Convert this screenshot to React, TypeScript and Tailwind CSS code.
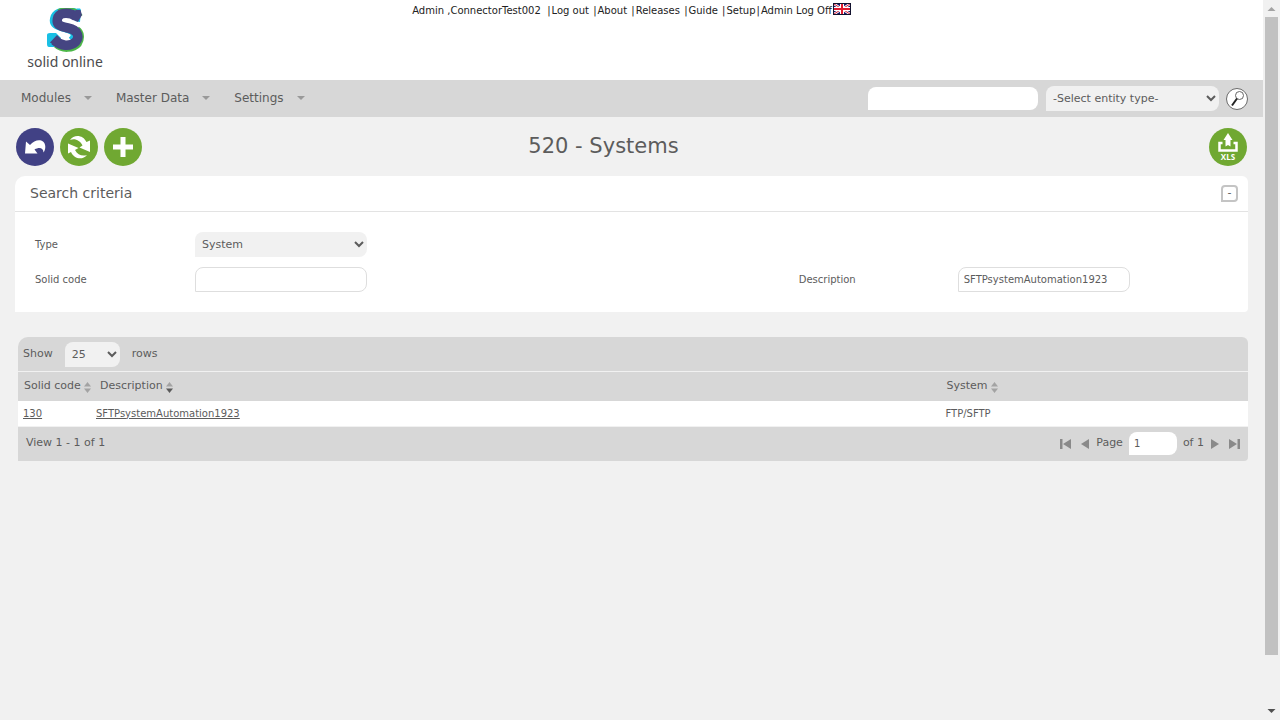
import type { ReactNode } from "react";

const topLinks = ["Log out", "About", "Releases", "Guide", "Setup"];
const menus = ["Modules", "Master Data", "Settings"];

function Logo() {
  return (
    <a href="#" className="flex w-[74px] flex-col items-center" aria-label="solid online">
      <svg width="38" height="46" viewBox="2 4 38 46" fill="none" aria-hidden="true">
        <path d="M31 9C25 7 14 7 11 13C8 21 15 22 22 24C31 26 34 31 28 37" stroke="#19bfe4" strokeWidth="9" />
        <path d="M3 31Q3 29 6 29L12 29L17 34L10 43H5Q3 43 3 40Z" fill="#19bfe4" />
        <path d="M28 7L33 4.500H36Q37 5 37 7L36 18L31 17Z" fill="#19bfe4" />
        <path d="M14 6C19 3.500 27 3.500 32 6L35 8L38 11.500" stroke="#4cb748" strokeWidth="1.500" />
        <path d="M11 42C17 48 30 48 36 41C40 35 39 27 34 24" stroke="#4cb748" strokeWidth="3" />
        <path d="M32 12.500C27 8.500 17 7.500 14 13C11 21 17 22.500 24 24C34 26 36 33 31.500 38C26 43 17 42 10.500 36.500" stroke="#454582" strokeWidth="9.500" />
        <path d="M28 9L32 6H36.500L38 11L34 18L29 16Z" fill="#454582" />
        <path d="M6 38.500L13 31L19 37L13 43Z" fill="#454582" />
      </svg>
      <span className="whitespace-nowrap font-['Noto_Sans',sans-serif] text-[14px] leading-4 text-[#4b4b4d]">
        solid online
      </span>
    </a>
  );
}

function Flag() {
  return (
    <svg width="18" height="12" viewBox="0 0 18 12" role="img" aria-label="English">
      <rect width="18" height="12" fill="#17196b" />
      <path d="M1 1L17 11M17 1L1 11" stroke="#fff" strokeWidth="2.600" />
      <path d="M1 1L17 11M17 1L1 11" stroke="#d8203a" strokeWidth="1" />
      <path d="M9 1V11M1 6H17" stroke="#fff" strokeWidth="4" />
      <path d="M9 1V11M1 6H17" stroke="#e01b2f" strokeWidth="2" />
      <rect x=".5" y=".5" width="17" height="11" stroke="#12122e" fill="none" />
    </svg>
  );
}

function RoundButton({ label, tone, children }: { label: string; tone: string; children: ReactNode }) {
  return (
    <button type="button" aria-label={label} className={`size-[38px] shrink-0 rounded-full ${tone}`}>
      <svg width="38" height="38" viewBox="0 0 38 38" fill="none" aria-hidden="true">
        {children}
      </svg>
    </button>
  );
}

function SortIcon({ desc = false }: { desc?: boolean }) {
  return (
    <svg width="7" height="11" viewBox="0 0 7 11" aria-hidden="true" className="mt-0.5">
      <path d="M3.500 0L7 4.500H0Z" fill="#a3a3a3" />
      <path d="M0 6.500H7L3.500 11Z" fill={desc ? "#5a5a5a" : "#a3a3a3"} />
    </svg>
  );
}

function PagerButton({ label, d, width }: { label: string; d: string; width: number }) {
  return (
    <button type="button" aria-label={label}>
      <svg width={width} height="10" viewBox={`0 0 ${width} 10`} fill="#8a8a8a" aria-hidden="true">
        <path d={d} />
      </svg>
    </button>
  );
}

function Scrollbar() {
  return (
    <div aria-hidden="true" className="sticky top-0 flex h-screen w-[17px] shrink-0 flex-col items-center bg-[#f1f1f1]">
      <svg width="17" height="17" viewBox="0 0 17 17" className="shrink-0">
        <path d="M4.500 11L8.500 7L12.500 11Z" fill="#a3a3a3" />
      </svg>
      <div className="w-full flex-1 px-0.5">
        <div className="h-[93%] w-full bg-[#c1c1c1]" />
      </div>
      <svg width="17" height="17" viewBox="0 0 17 17" className="shrink-0">
        <path d="M4.500 6L8.500 10L12.500 6Z" fill="#505050" />
      </svg>
    </div>
  );
}

export default function App() {
  return (
    <div className="flex min-h-screen bg-[#f1f1f1] font-[Verdana,'DejaVu_Sans',sans-serif] text-[11px] text-[#5c5c5c]">
      <div className="min-w-0 flex-1">
        <header className="grid h-20 grid-cols-[1fr_auto_1fr] items-start bg-white">
          <div className="pl-7 pt-2">
            <Logo />
          </div>
          <div className="flex pt-[3px] text-[10px] leading-4 text-[#222]">
            <span className="whitespace-pre">Admin ,ConnectorTest002  </span>
            {topLinks.map((link) => (
              <span key={link} className="flex gap-px whitespace-pre">
                |<a href="#">{link}</a>
                <span>{link === "Setup" ? "" : " "}</span>
              </span>
            ))}
            <span className="flex gap-px">
              |<a href="#">Admin Log Off</a>
            </span>
            <a href="#" className="ml-px">
              <Flag />
            </a>
          </div>
        </header>

        <nav className="flex h-[37px] items-center justify-between bg-[#d7d7d7] pl-[21px] pr-3.5">
          <ul className="flex gap-6 pb-0.5 text-[12px]">
            {menus.map((menu) => (
              <li key={menu}>
                <button type="button" className="flex items-center gap-[13px]">
                  {menu}
                  <svg width="8" height="4" viewBox="0 0 8 4" aria-hidden="true">
                    <path d="M0 0H8L4 4Z" fill="#999" />
                  </svg>
                </button>
              </li>
            ))}
          </ul>
          <form className="flex items-center">
            <input
              aria-label="Search text"
              className="h-[23px] w-[170px] rounded-lg rounded-bl-none bg-white px-1.5 text-[10px] outline-none"
            />
            <select
              aria-label="Entity type"
              className="ml-2 h-[25px] w-[173px] rounded-lg rounded-bl-none bg-[#f1f1f1] px-[3px] text-[11px] outline-none"
            >
              <option>-Select entity type-</option>
            </select>
            <button type="button" aria-label="Search" className="ml-1.5">
              <svg width="24" height="24" viewBox="0 0 24 24" fill="none" aria-hidden="true">
                <circle cx="12" cy="12" r="10.500" fill="#fff" stroke="#6b6b6b" />
                <circle cx="14.500" cy="8.500" r="4" stroke="#666" />
                <path d="M12 11.500L7 18.500" stroke="#222" strokeWidth="2" />
              </svg>
            </button>
          </form>
        </nav>

        <main className="pl-[15px] pr-[15px]">
          <div className="flex h-[59px] items-center gap-1.5 px-px">
            <RoundButton label="Back" tone="bg-[#414185]">
              <path d="M9 25.500L10 13.500L14 17C18 12 24 11 27 13.500C30 16 30 21 27.500 24.500C27.500 20 23.500 18.500 18.500 21.500L21.500 25.500Z" fill="#fff" />
            </RoundButton>
            <RoundButton label="Refresh" tone="bg-[#70a832]">
              <path d="M10 12C14 6 23 6.500 26.500 14L30 12.500V24L19.500 19.500L22.500 17.500C20 12.500 15 10 10 12Z" fill="#fff" />
              <path d="M27 27C22.500 32.500 14 31 11 24L8 25.500V15.500L18.500 20L15 22C17.500 27 22.500 28.500 27 27Z" fill="#fff" />
            </RoundButton>
            <RoundButton label="Add" tone="bg-[#70a832]">
              <path d="M19 9V29M9 19H29" stroke="#fff" strokeWidth="5" />
            </RoundButton>
            <h1 className="flex-1 pr-36 pt-px text-center text-[21px]">520 - Systems</h1>
            <RoundButton label="Export to XLS" tone="bg-[#70a832]">
              <path d="M19 5L23.500 12H21.500V18.500L19 17L16.500 18.500V12H14.500Z" fill="#fff" />
              <path d="M13.500 15H10.500V22.500H27.500V15H24.500" stroke="#fff" strokeWidth="2.500" />
              <text x="19" y="32" textAnchor="middle" fill="#fff" fontSize="8" fontWeight="700" fontFamily="Open Sans, sans-serif">
                XLS
              </text>
            </RoundButton>
          </div>

          <section className="rounded-tl-[10px] rounded-tr-md rounded-br bg-white">
            <div className="flex h-9 items-center justify-between border-b border-[#e3e3e3] pl-[15px] pr-2.5">
              <h2 className="text-[14px]">Search criteria</h2>
              <button
                type="button"
                aria-label="Collapse search criteria"
                className="flex size-[17px] items-center justify-center rounded rounded-bl-none border-2 border-[#c4c4c4] pb-0.5 leading-none"
              >
                -
              </button>
            </div>
            <form className="grid grid-cols-[17fr_10fr] gap-y-2.5 py-5 pl-5 text-[10px]">
              <div className="col-span-2 flex items-center">
                <label htmlFor="type" className="w-40">
                  Type
                </label>
                <select
                  id="type"
                  className="h-[25px] w-[172px] rounded-lg rounded-bl-none bg-[#f1f1f1] px-[3px] text-[11px] outline-none"
                >
                  <option>System</option>
                </select>
              </div>
              <div className="flex items-center">
                <label htmlFor="code" className="w-40">
                  Solid code
                </label>
                <input
                  id="code"
                  className="h-[25px] w-[172px] rounded-lg rounded-bl-none border border-[#dedede] px-[5px] outline-none"
                />
              </div>
              <div className="flex items-center">
                <label htmlFor="description" className="w-[159px]">
                  Description
                </label>
                <input
                  id="description"
                  defaultValue="SFTPsystemAutomation1923"
                  className="h-[25px] w-[172px] rounded-lg rounded-bl-none border border-[#dedede] px-[5px] outline-none"
                />
              </div>
            </form>
          </section>

          <section className="ml-[3px] mt-[25px] overflow-hidden rounded-tl-[10px] rounded-tr-md rounded-br bg-[#d7d7d7]">
            <div className="flex h-[35px] items-center border-b border-[#f1f1f1] pl-[5px] pt-px">
              <label htmlFor="rows">Show</label>
              <select
                id="rows"
                className="ml-3 mr-3 h-[25px] w-[55px] rounded-lg rounded-bl-none bg-[#f1f1f1] px-[3px] text-[11px] outline-none"
              >
                <option>25</option>
              </select>
              <span>rows</span>
            </div>
            <table className="w-full table-fixed border-collapse text-left">
              <thead>
                <tr className="h-[29px]">
                  <th className="w-[76px] pl-1.5 font-normal">
                    <button type="button" className="flex items-center gap-[3px] whitespace-nowrap">
                      Solid code <SortIcon />
                    </button>
                  </th>
                  <th className="pl-1.5 font-normal">
                    <button type="button" className="flex items-center gap-[3px]">
                      Description <SortIcon desc />
                    </button>
                  </th>
                  <th className="w-[25%] pl-1.5 font-normal">
                    <button type="button" className="flex items-center gap-[3px]">
                      System <SortIcon />
                    </button>
                  </th>
                </tr>
              </thead>
              <tbody>
                <tr className="h-[25px] border-b border-[#f1f1f1] bg-white text-[10px]">
                  <td className="pl-[5px]">
                    <a href="#" className="underline">
                      130
                    </a>
                  </td>
                  <td className="pl-0.5">
                    <a href="#" className="underline">
                      SFTPsystemAutomation1923
                    </a>
                  </td>
                  <td className="pl-[5px]">FTP/SFTP</td>
                </tr>
              </tbody>
            </table>
            <div className="flex h-[34px] items-center justify-between pl-2 pr-2">
              <span>View 1 - 1 of 1</span>
              <div className="flex items-center">
                <div className="flex items-center gap-2.5">
                  <PagerButton label="First page" width={11} d="M0 0H2.5V10H0ZM11 0V10L3 5Z" />
                  <PagerButton label="Previous page" width={8} d="M8 0V10L0 5Z" />
                </div>
                <label htmlFor="page" className="ml-[7px]">
                  Page
                </label>
                <input
                  id="page"
                  defaultValue="1"
                  className="mx-1.5 h-[23px] w-12 rounded-lg rounded-bl-none bg-white px-[5px] text-[10px] outline-none"
                />
                <span className="mr-[7px]">of 1</span>
                <div className="flex items-center gap-2.5">
                  <PagerButton label="Next page" width={8} d="M0 0L8 5L0 10Z" />
                  <PagerButton label="Last page" width={11} d="M0 0L8 5L0 10ZM8.5 0H11V10H8.500Z" />
                </div>
              </div>
            </div>
          </section>
        </main>
      </div>
      <Scrollbar />
    </div>
  );
}
